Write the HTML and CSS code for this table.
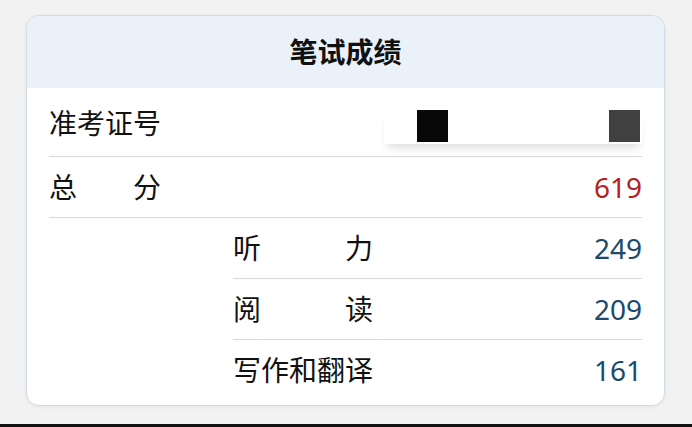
FILE: index.html
```html
<!DOCTYPE html>
<html lang="zh-CN">
<head>
  <meta charset="UTF-8" />
  <title>笔试成绩</title>
  <link rel="stylesheet" href="styles.css">
</head>
<body>
  <div class="page">
    <div class="card">
      <div class="card-head">笔试成绩</div>
      <div class="card-body">
        <div class="row first">
          <span class="label">准考证号</span>
          <span class="masked">
            <i class="blk"></i>
            <i class="blk grey"></i>
          </span>
        </div>
        <div class="row">
          <span class="label">总分</span>
          <span class="score total">619</span>
        </div>
        <div class="sub">
          <div class="row">
            <span class="label wide">听力</span>
            <span class="score">249</span>
          </div>
          <div class="row">
            <span class="label wide">阅读</span>
            <span class="score">209</span>
          </div>
          <div class="row last">
            <span class="label wide">写作和翻译</span>
            <span class="score">161</span>
          </div>
        </div>
      </div>
    </div>
  </div>
  <div class="edge"></div>
</body>
</html>
```

FILE: styles.css
```css
body {
  margin: 0;
  background: #f2f2f2;
  font-family: "Noto Sans CJK SC", "Noto Sans", sans-serif;
  color: #111;
}
.page {
  height: 424px;
  padding: 15px 27px 0 26px;
  box-sizing: border-box;
}
.edge {
  height: 3px;
  background: #111;
}
.card {
  height: 391px;
  box-sizing: border-box;
  background: #fff;
  border: 1px solid #cfdce6;
  border-radius: 13px;
  box-shadow: 0 1px 4px rgba(0,0,0,0.06);
  overflow: hidden;
}
.card-head {
  height: 72px;
  background: #eaf1f9;
  display: flex;
  align-items: center;
  justify-content: center;
  font-size: 28px;
  font-weight: 700;
  padding-bottom: 2px;
  box-sizing: border-box;
}
.card-body {
  padding: 5px 22px 0 22px;
}
.row {
  height: 60px;
  display: flex;
  align-items: center;
  justify-content: space-between;
  border-bottom: 1px solid #d4dadf;
}
.row.first {
  padding-bottom: 3px;
}
.row.last {
  border-bottom: none;
}
.label {
  width: 4em;
  font-size: 28px;
  line-height: 1;
  margin-bottom: 3px;
  text-align: justify;
  text-align-last: justify;
}
.label.wide {
  width: 5em;
}
.sub {
  margin-left: 184px;
}
.score {
  font-family: "Noto Sans", sans-serif;
  font-size: 28px;
  color: #1d4a6a;
  margin-bottom: 1px;
}
.score.total {
  color: #b42020;
}
.masked {
  width: 258px;
  height: 34px;
  display: flex;
  justify-content: space-between;
  padding-left: 33px;
  padding-right: 2px;
  box-sizing: border-box;
  background: #fff;
  box-shadow: 0 7px 9px -3px rgba(0,0,0,0.13);
  margin-top: 8px;
}
.blk {
  width: 31px;
  height: 32px;
  background: #080808;
}
.blk.grey {
  background: #404040;
}
```
